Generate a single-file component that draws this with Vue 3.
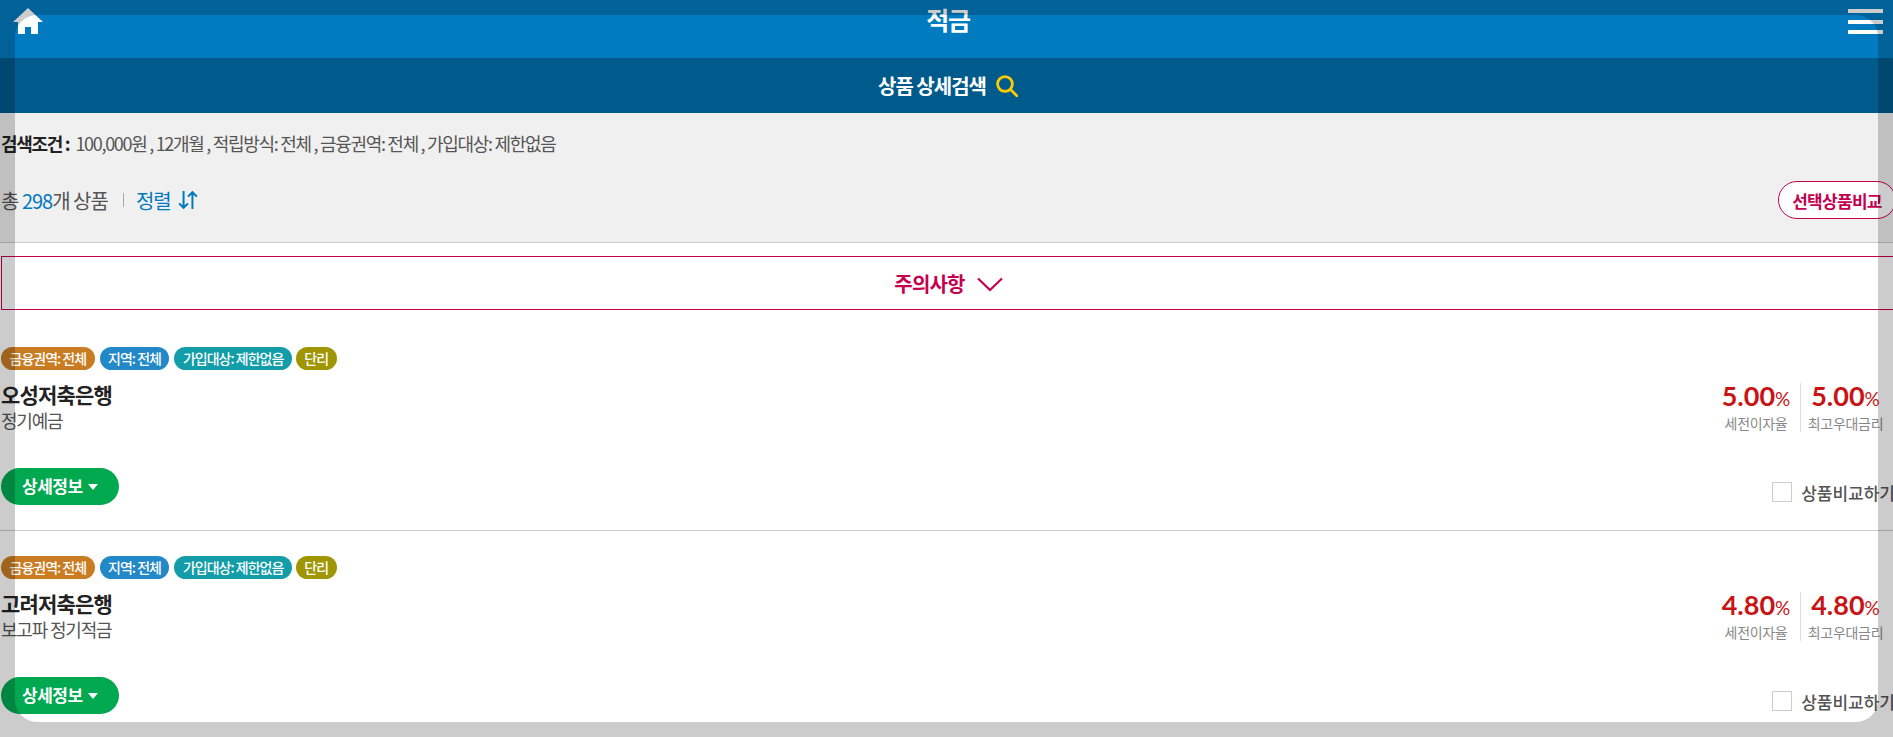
<template>
  <div class="screen">
    <div class="page">
      <header class="top-bar">
        <a class="home-link">
          <svg width="30" height="26" viewBox="0 0 30 26">
            <path d="M15 0 30 14H25V26H18V19H12V26H5V14H0Z" fill="#fff" />
          </svg>
        </a>
        <h1 class="title">적금</h1>
        <div class="menu-btn"><i></i><i></i><i></i></div>
      </header>

      <div class="search-bar">
        <span>상품 상세검색</span>
        <svg width="22" height="22" viewBox="0 0 22 22" fill="none" stroke="#fdcb00" stroke-width="2.8">
          <circle cx="9" cy="9" r="7.4" />
          <path d="M14.5 14.5 21 21" stroke-linecap="round" />
        </svg>
      </div>

      <section class="filter">
        <p class="conditions">
          <b>검색조건 :</b>
          <span>100,000원 , 12개월 , 적립방식: 전체 , 금융권역: 전체 , 가입대상: 제한없음</span>
        </p>
        <div class="filter-row">
          <div class="totals">
            <span>총 <em>298</em>개 상품</span>
            <span class="sep"></span>
            <a class="sort">정렬
              <svg width="20" height="20" viewBox="0 0 18 18" fill="none" stroke="#0079be" stroke-width="1.8">
                <path d="M5 1V16M1 12l4 4 4-4M13 17V2M9 6l4-4 4 4" />
              </svg>
            </a>
          </div>
          <button class="compare-btn">선택상품비교</button>
        </div>
      </section>

      <div class="notice">
        <span>주의사항</span>
        <svg class="notice-arrow" width="26" height="15" viewBox="0 0 26 15" fill="none" stroke="#c4004f" stroke-width="2.2">
          <path d="M1 1.5 13 13 25 1.5" />
        </svg>
      </div>

      <article v-for="item in products" :key="item.bank" class="product">
        <div class="tags">
          <span class="tag tag-area">금융권역: 전체</span>
          <span class="tag tag-region">지역: 전체</span>
          <span class="tag tag-join">가입대상: 제한없음</span>
          <span class="tag tag-type">단리</span>
        </div>
        <div class="product-main">
          <div>
            <h2 class="bank">{{ item.bank }}</h2>
            <p class="product-name">{{ item.name }}</p>
          </div>
          <div class="rates">
            <div class="rate">
              <strong>{{ item.rate }}<small>%</small></strong>
              <span>세전이자율</span>
            </div>
            <div class="rate">
              <strong>{{ item.best }}<small>%</small></strong>
              <span>최고우대금리</span>
            </div>
          </div>
        </div>
        <div class="product-foot">
          <button class="detail-btn">상세정보 <i class="caret"></i></button>
          <label class="check"><i class="box"></i>상품비교하기</label>
        </div>
      </article>
    </div>
    <div class="frame"></div>
  </div>
</template>

<script setup>
const products = [
  { bank: "오성저축은행", name: "정기예금", rate: "5.00", best: "5.00" },
  { bank: "고려저축은행", name: "보고파 정기적금", rate: "4.80", best: "4.80" },
];
</script>

<style>
html,
body {
  margin: 0;
  overflow: hidden;
}
</style>

<style scoped>
.screen {
  position: relative;
  height: 100vh;
  overflow: hidden;
  font-family: "Noto Sans CJK KR", "Noto Sans", sans-serif;
  background: #fff;
}

.page {
  width: calc(100% + 3px);
}

.frame {
  position: absolute;
  inset: 15px;
  border-radius: 22px;
  box-shadow: 0 0 0 40px rgba(0, 0, 0, 0.2);
  pointer-events: none;
}

.top-bar {
  position: relative;
  height: 58px;
  background: #007bbf;
  text-align: center;
}

.home-link {
  position: absolute;
  left: 13px;
  top: 8px;
  line-height: 0;
}

.title {
  margin: 0;
  padding-top: 2px;
  font-size: 25px;
  line-height: 34px;
  font-weight: 700;
  letter-spacing: -1.2px;
  color: #fff;
}

.menu-btn {
  position: absolute;
  left: 1848px;
  top: 9px;
  width: 35px;
  display: flex;
  flex-direction: column;
  gap: 6.5px;
}

.menu-btn i {
  display: block;
  height: 4px;
  background: #fff;
}

.search-bar {
  height: 55px;
  background: #005b8c;
  color: #fff;
  display: flex;
  align-items: center;
  justify-content: center;
  gap: 10px;
  font-size: 20px;
  font-weight: 700;
  letter-spacing: -1px;
}

.filter {
  height: 130px;
  box-sizing: border-box;
  background: #f0f0f0;
  border-bottom: 1px solid #ccc;
  padding: 16px 0 0 1px;
}

.conditions {
  margin: 0;
  font-size: 18px;
  line-height: 28px;
  color: #555;
  letter-spacing: -1.3px;
}

.conditions b {
  color: #222;
  margin-right: 6px;
}

.filter-row {
  margin-top: 24px;
  display: flex;
  justify-content: space-between;
  align-items: center;
}

.totals {
  display: flex;
  align-items: center;
  font-size: 20px;
  color: #555;
  letter-spacing: -1px;
}

.totals em {
  font-style: normal;
  color: #0079be;
}

.sep {
  width: 1px;
  height: 14px;
  background: #aaa;
  margin: 0 12px 0 15px;
}

.sort {
  display: flex;
  align-items: center;
  gap: 7px;
  color: #0079be;
}

.compare-btn {
  width: 118px;
  height: 38px;
  padding: 0;
  border: 1px solid #c4004f;
  border-radius: 19px;
  background: #fff;
  color: #c4004f;
  font: 700 17px "Noto Sans CJK KR", sans-serif;
  letter-spacing: -0.7px;
}

.notice {
  height: 54px;
  box-sizing: border-box;
  margin: 13px 0 0 1px;
  border: 1px solid #c4004f;
  color: #c4004f;
  display: flex;
  align-items: center;
  justify-content: center;
  gap: 12px;
  font-size: 20px;
  font-weight: 700;
  letter-spacing: -0.8px;
}

.notice-arrow {
  margin-top: 3px;
}

.product {
  height: 209px;
  box-sizing: border-box;
  padding: 25px 0 0 1px;
  border-bottom: 1px solid #ccc;
}

.notice + .product {
  margin-top: 12px;
}

.tags {
  display: flex;
  gap: 5px;
}

.tag {
  height: 23px;
  padding: 0 8.5px;
  border-radius: 12px;
  color: #fff;
  font-size: 14px;
  font-weight: 500;
  line-height: 22px;
  letter-spacing: -1px;
}

.tag-area {
  background: #c97c22;
}

.tag-region {
  background: #2388c8;
}

.tag-join {
  background: #129da8;
}

.tag-type {
  background: #a09604;
  margin-left: -1px;
}

.product-main {
  display: flex;
  justify-content: space-between;
  margin-top: 10px;
}

.bank {
  margin: 0;
  font-size: 21px;
  line-height: 28px;
  font-weight: 700;
  color: #222;
  letter-spacing: -0.8px;
}

.product-name {
  margin: 0;
  font-size: 18px;
  line-height: 24px;
  color: #555;
  letter-spacing: -1.2px;
}

.rates {
  display: flex;
  margin: 3px 6px 0 0;
  height: 49px;
}

.rate {
  width: 89px;
  display: flex;
  flex-direction: column;
  align-items: center;
}

.rate:first-child {
  width: 84px;
  padding-right: 5px;
  box-sizing: border-box;
  border-right: 1px solid #ddd;
}

.rate strong {
  font: 700 27px/26px Lato, sans-serif;
  color: #c81414;
}

.rate small {
  font-size: 19px;
  font-weight: 400;
}

.rate span {
  font-size: 14px;
  line-height: 22px;
  color: #888;
  letter-spacing: -0.3px;
  white-space: nowrap;
}

.product-foot {
  display: flex;
  justify-content: space-between;
  margin-top: 36px;
}

.detail-btn {
  width: 118px;
  height: 37px;
  padding: 0 0 3px;
  border: 0;
  border-radius: 19px;
  background: #00a850;
  color: #fff;
  font: 700 17px "Noto Sans CJK KR", sans-serif;
  letter-spacing: -0.5px;
}

.caret {
  display: inline-block;
  margin-left: 2px;
  vertical-align: 3px;
  border-left: 5.5px solid transparent;
  border-right: 5.5px solid transparent;
  border-top: 6px solid #fff;
}

.check {
  display: flex;
  align-items: center;
  gap: 9px;
  margin: 12px 1px 0 0;
  height: 24px;
  font-size: 17px;
  font-weight: 500;
  color: #555;
  white-space: nowrap;
}

.box {
  width: 18px;
  height: 18px;
  border: 1px solid #ccc;
  background: #fff;
}
</style>
